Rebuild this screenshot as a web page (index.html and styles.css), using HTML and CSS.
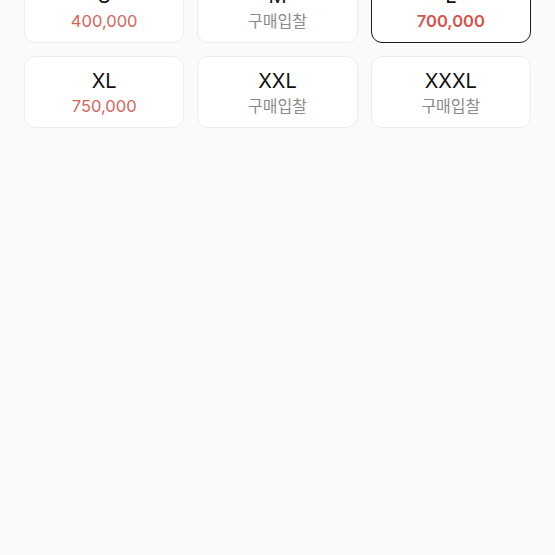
FILE: index.html
```html
<!DOCTYPE html>
<html lang="ko">
<head>
<meta charset="utf-8">
<link rel="stylesheet" href="styles.css">
</head>
<body>
<div class="grid">
  <div class="card"><div class="size">S</div><div class="price">400,000</div></div>
  <div class="card"><div class="size">M</div><div class="bid">구매입찰</div></div>
  <div class="card selected"><div class="size">L</div><div class="price strong">700,000</div></div>
  <div class="card"><div class="size">XL</div><div class="price">750,000</div></div>
  <div class="card"><div class="size">XXL</div><div class="bid">구매입찰</div></div>
  <div class="card"><div class="size">XXXL</div><div class="bid">구매입찰</div></div>
</div>
</body>
</html>
```
FILE: styles.css
```css
html, body {
  margin: 0;
  background: #fafafa;
  height: 100%;
  overflow: hidden;
}
body {
  font-family: Inter, "Noto Sans CJK KR", sans-serif;
}
.grid {
  display: grid;
  grid-template-columns: repeat(3, 1fr);
  gap: 13px;
  padding: 0 24px;
  margin-top: -29px;
}
.card {
  height: 72px;
  box-sizing: border-box;
  background: #fff;
  border: 1px solid #ececec;
  border-radius: 11px;
  display: flex;
  flex-direction: column;
  align-items: center;
  justify-content: center;
  gap: 2px;
  padding-top: 1px;
}
.card.selected {
  border: 1.5px solid #1c1c1c;
}
.size {
  font-size: 20px;
  line-height: 24px;
  color: #111;
}
.price {
  font-size: 16.5px;
  line-height: 22px;
  color: #d4655c;
}
.price.strong {
  font-weight: 600;
  color: #d9524a;
}
.bid {
  font-size: 16px;
  line-height: 22px;
  color: #8a8a8a;
}
```
